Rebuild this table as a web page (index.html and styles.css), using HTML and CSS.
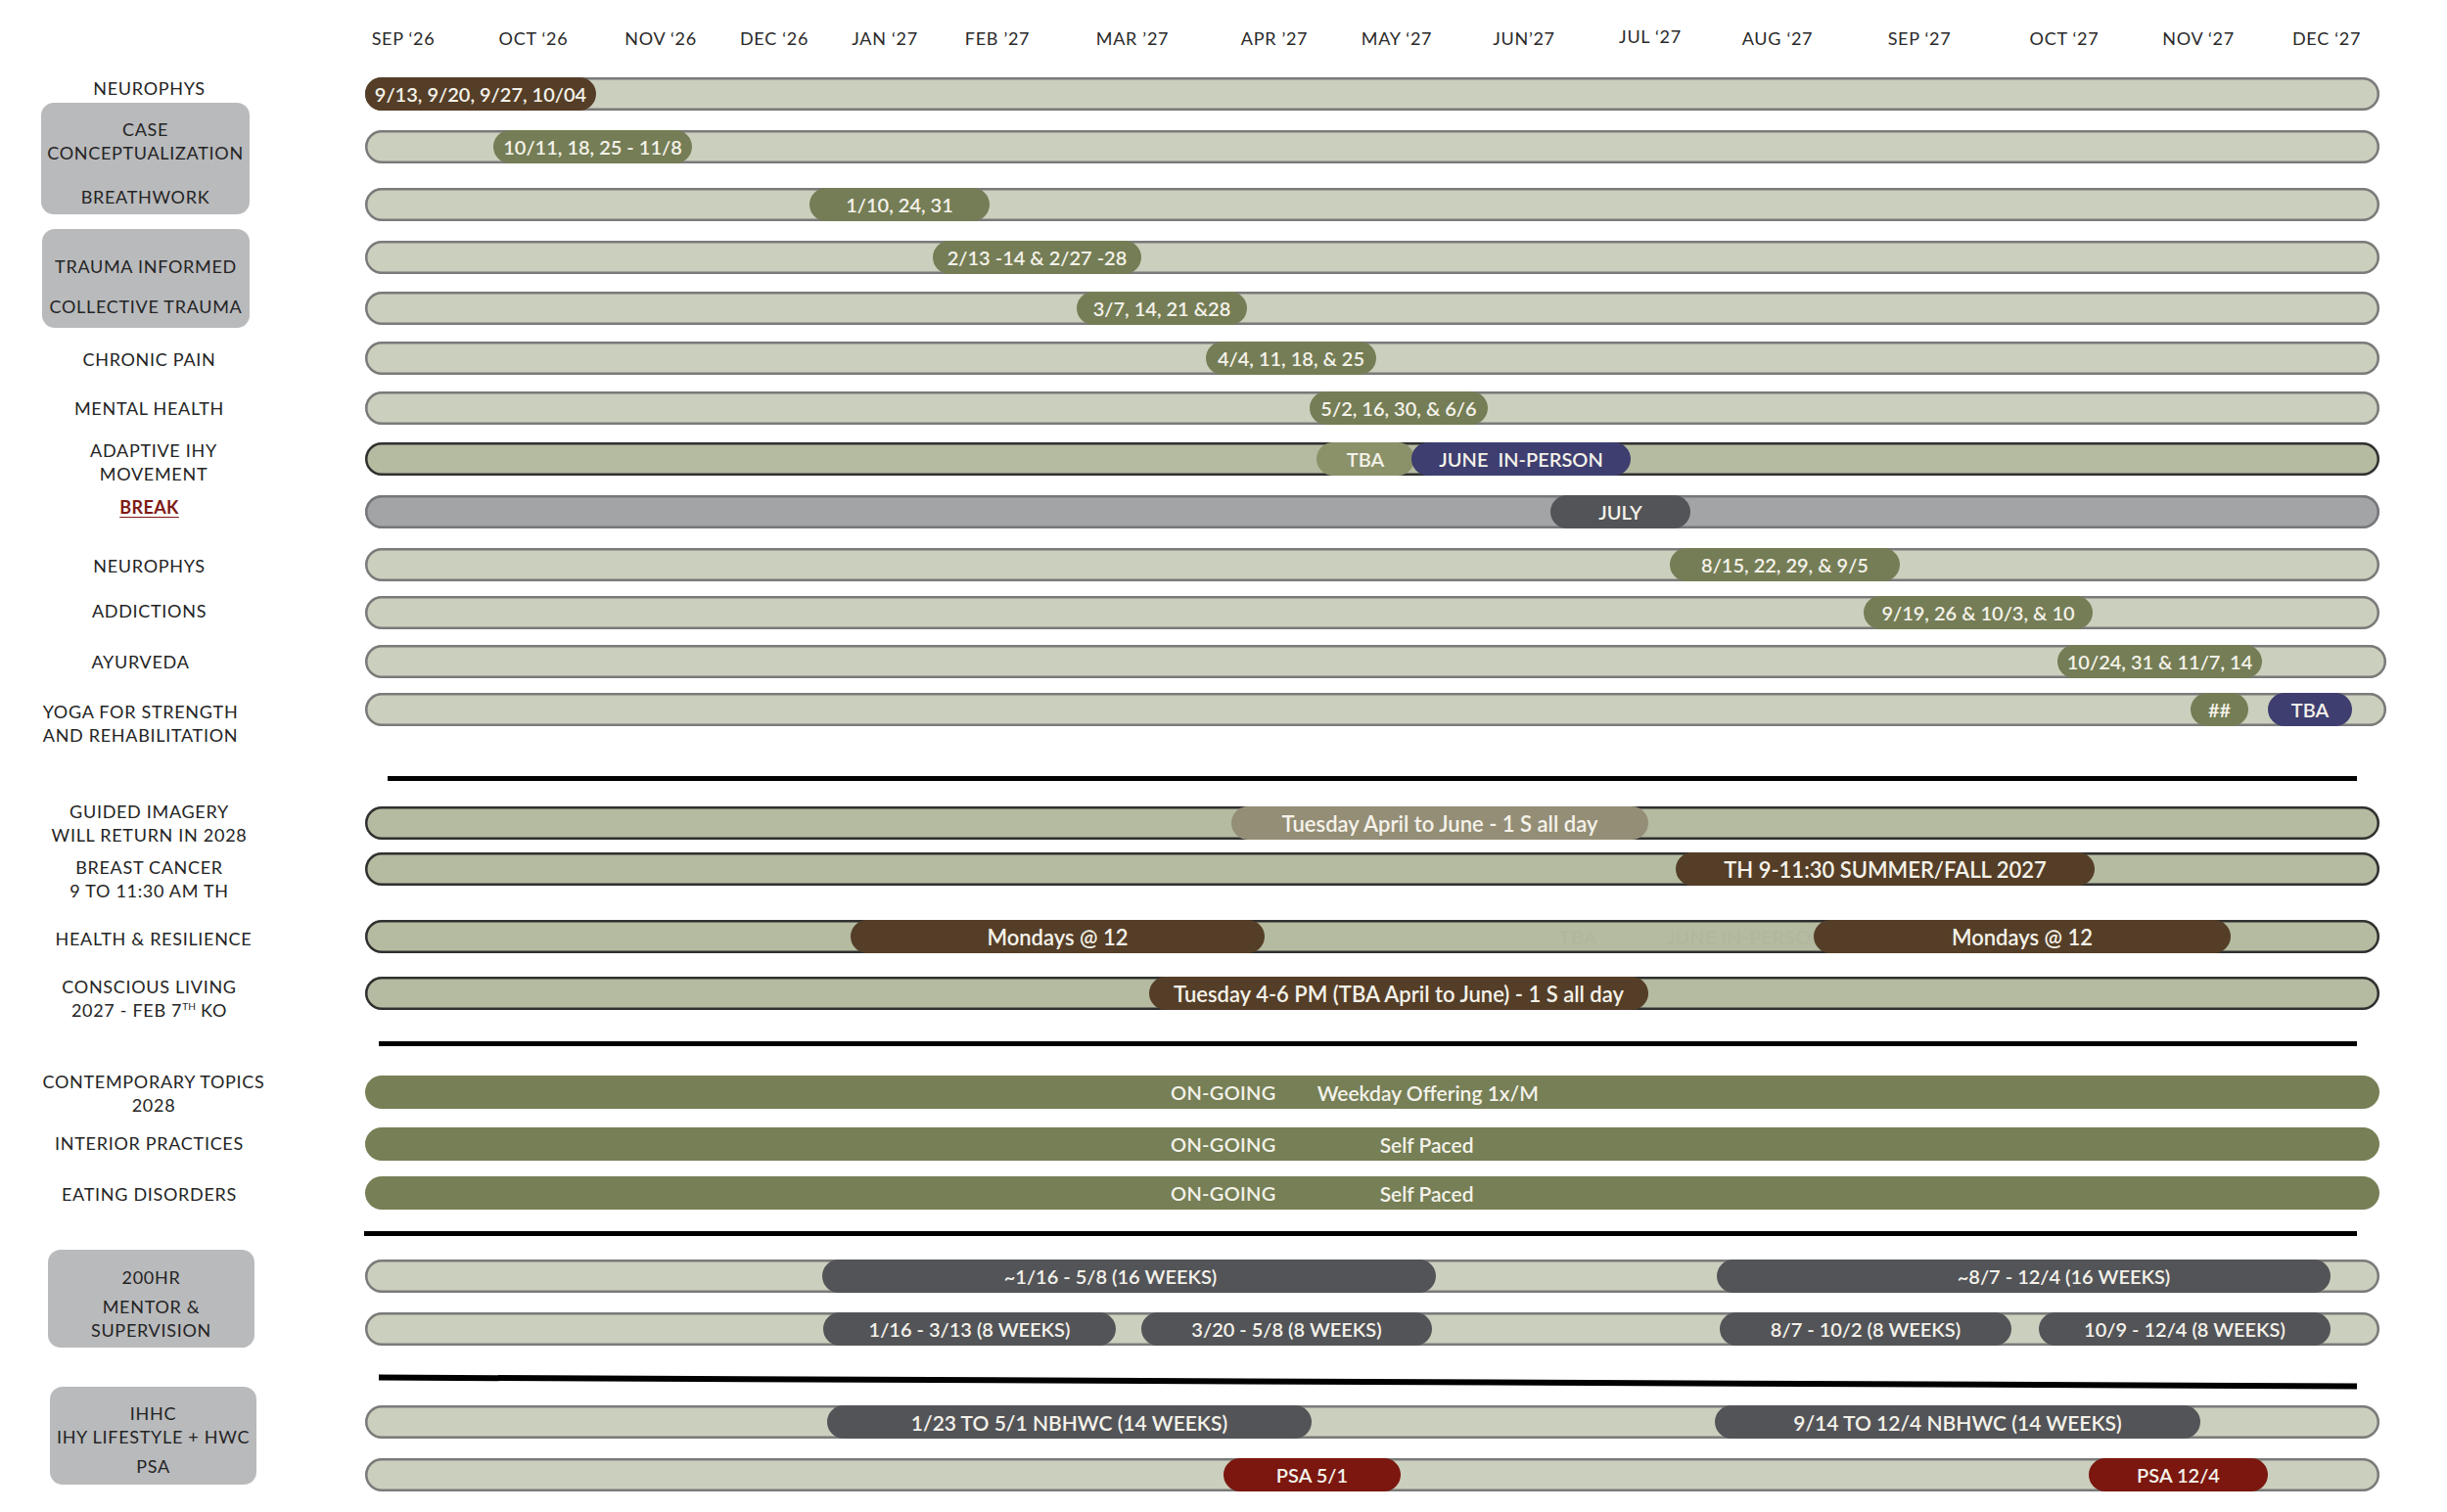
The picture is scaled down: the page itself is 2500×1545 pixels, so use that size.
FILE: index.html
```html
<!DOCTYPE html>
<html lang="en">
<head>
<meta charset="utf-8">
<title>Course Calendar 2026–2027</title>
<link rel="stylesheet" href="styles.css">
</head>
<body>
<div class="page">
  <div class="labels">
    <div class="label mt-78">NEUROPHYS</div>
    <div class="box mt-3 box-a">
      <div class="label">CASE<br>CONCEPTUALIZATION</div>
      <div class="label mt-21">BREATHWORK</div>
    </div>
    <div class="box mt-15 box-b">
      <div class="label">TRAUMA INFORMED</div>
      <div class="label mt-17">COLLECTIVE TRAUMA</div>
    </div>
    <div class="label mt-20">CHRONIC PAIN</div>
    <div class="label mt-26">MENTAL HEALTH</div>
    <div class="label mt-19 right">ADAPTIVE IHY<br>MOVEMENT</div>
    <div class="label mt-10"><span class="break-label">BREAK</span></div>
    <div class="label mt-36">NEUROPHYS</div>
    <div class="label mt-22">ADDICTIONS</div>
    <div class="label mt-28 left">AYURVEDA</div>
    <div class="label mt-27 left">YOGA FOR STRENGTH<br>AND REHABILITATION</div>
    <div class="label mt-54">GUIDED IMAGERY<br>WILL RETURN IN 2028</div>
    <div class="label mt-9">BREAST CANCER<br>9 TO 11:30 AM TH</div>
    <div class="label mt-25 right">HEALTH &amp; RESILIENCE</div>
    <div class="label mt-25">CONSCIOUS LIVING<br>2027 - FEB 7<sup>TH</sup> KO</div>
    <div class="label mt-49 right">CONTEMPORARY TOPICS<br>2028</div>
    <div class="label mt-15">INTERIOR PRACTICES</div>
    <div class="label mt-28">EATING DISORDERS</div>
    <div class="box mt-45 box-c">
      <div class="label">200HR</div>
      <div class="label mt-6">MENTOR &amp;<br>SUPERVISION</div>
    </div>
    <div class="box mt-40 box-d">
      <div class="label">IHHC<br>IHY LIFESTYLE + HWC</div>
      <div class="label mt-6">PSA</div>
    </div>
  </div>

  <div class="chart">
    <div class="axis">
      <span class="month" style="left:39px">SEP ‘26</span>
      <span class="month" style="left:172px">OCT ‘26</span>
      <span class="month" style="left:302px">NOV ‘26</span>
      <span class="month" style="left:418px">DEC ‘26</span>
      <span class="month" style="left:531px">JAN ‘27</span>
      <span class="month" style="left:646px">FEB ’27</span>
      <span class="month" style="left:784px">MAR ’27</span>
      <span class="month" style="left:929px">APR ’27</span>
      <span class="month" style="left:1054px">MAY ‘27</span>
      <span class="month" style="left:1184px">JUN’27</span>
      <span class="month up" style="left:1313px">JUL ‘27</span>
      <span class="month" style="left:1443px">AUG ‘27</span>
      <span class="month" style="left:1588px">SEP ‘27</span>
      <span class="month" style="left:1736px">OCT ‘27</span>
      <span class="month" style="left:1873px">NOV ‘27</span>
      <span class="month" style="left:2004px">DEC ‘27</span>
    </div>

    <div class="bar"><span class="pill brown" style="left:0;width:236px">9/13, 9/20, 9/27, 10/04</span></div>
    <div class="bar mt-20"><span class="pill green" style="left:131px;width:203px">10/11, 18, 25 - 11/8</span></div>
    <div class="bar mt-25"><span class="pill green" style="left:454px;width:184px">1/10, 24, 31</span></div>
    <div class="bar mt-20"><span class="pill green" style="left:580px;width:213px">2/13 -14 &amp; 2/27 -28</span></div>
    <div class="bar mt-18"><span class="pill green" style="left:727px;width:174px">3/7, 14, 21 &amp;28</span></div>
    <div class="bar mt-17"><span class="pill green" style="left:859px;width:174px">4/4, 11, 18, &amp; 25</span></div>
    <div class="bar mt-17"><span class="pill green" style="left:965px;width:182px">5/2, 16, 30, &amp; 6/6</span></div>
    <div class="bar dark mt-18">
      <span class="pill olive" style="left:972px;width:100px">TBA</span>
      <span class="pill navy" style="left:1069px;width:224px">JUNE&nbsp; IN-PERSON</span>
    </div>
    <div class="bar pause mt-20"><span class="pill slate" style="left:1211px;width:143px">JULY</span></div>
    <div class="bar mt-20"><span class="pill green" style="left:1333px;width:235px">8/15, 22, 29, &amp; 9/5</span></div>
    <div class="bar mt-15"><span class="pill green" style="left:1531px;width:234px">9/19, 26 &amp; 10/3, &amp; 10</span></div>
    <div class="bar long mt-16"><span class="pill green" style="left:1729px;width:209px">10/24, 31 &amp; 11/7, 14</span></div>
    <div class="bar long mt-15">
      <span class="pill green" style="left:1865px;width:59px">##</span>
      <span class="pill navy" style="left:1944px;width:86px">TBA</span>
    </div>

    <div class="rule rule-1"></div>

    <div class="bar dark mt-26"><span class="pill taupe large" style="left:885px;width:426px">Tuesday April to June - 1 S all day</span></div>
    <div class="bar dark mt-13"><span class="pill brown large" style="left:1339px;width:428px">TH 9-11:30 SUMMER/FALL 2027</span></div>
    <div class="bar dark mt-35">
      <span class="pill brown large" style="left:496px;width:423px">Mondays @ 12</span>
      <span class="ghost" style="left:1220px">TBA</span>
      <span class="ghost" style="left:1330px">JUNE IN-PERSON</span>
      <span class="pill brown large" style="left:1480px;width:426px">Mondays @ 12</span>
    </div>
    <div class="bar dark mt-24"><span class="pill brown large" style="left:801px;width:510px">Tuesday 4-6 PM (TBA April to June) - 1 S all day</span></div>

    <div class="rule rule-2"></div>

    <div class="bar solid mt-30">
      <span class="ongoing">ON-GOING</span><span class="note note-weekday">Weekday Offering 1x/M</span>
    </div>
    <div class="bar solid mt-19">
      <span class="ongoing">ON-GOING</span><span class="note note-self">Self Paced</span>
    </div>
    <div class="bar solid mt-16">
      <span class="ongoing">ON-GOING</span><span class="note note-self">Self Paced</span>
    </div>

    <div class="rule rule-3"></div>

    <div class="bar mt-24">
      <span class="pill slate lean-l" style="left:467px;width:627px">~1/16 - 5/8 (16 WEEKS)</span>
      <span class="pill slate lean-r" style="left:1381px;width:627px">~8/7 - 12/4 (16 WEEKS)</span>
    </div>
    <div class="bar mt-20">
      <span class="pill slate" style="left:468px;width:299px">1/16 - 3/13 (8 WEEKS)</span>
      <span class="pill slate" style="left:793px;width:297px">3/20 - 5/8 (8 WEEKS)</span>
      <span class="pill slate" style="left:1384px;width:298px">8/7 - 10/2 (8 WEEKS)</span>
      <span class="pill slate" style="left:1710px;width:298px">10/9 - 12/4 (8 WEEKS)</span>
    </div>

    <div class="rule rule-4"></div>

    <div class="bar mt-21">
      <span class="pill slate medium" style="left:472px;width:495px">1/23 TO 5/1 NBHWC (14 WEEKS)</span>
      <span class="pill slate medium" style="left:1379px;width:496px">9/14 TO 12/4 NBHWC (14 WEEKS)</span>
    </div>
    <div class="bar mt-20">
      <span class="pill red" style="left:877px;width:181px">PSA 5/1</span>
      <span class="pill red" style="left:1761px;width:183px">PSA 12/4</span>
    </div>
  </div>
</div>
</body>
</html>
```

FILE: styles.css
```css
* { box-sizing: border-box; }

html, body {
  margin: 0;
  padding: 0;
  background: #ffffff;
}

body {
  width: 2500px;
  height: 1545px;
  overflow: hidden;
  font-family: "Lato", "Open Sans", "Liberation Sans", sans-serif;
  color: #272727;
}

.page {
  display: flex;
  align-items: flex-start;
}

/* ---------- label column ---------- */
.labels {
  width: 305px;
  flex: none;
  display: flex;
  flex-direction: column;
}

.label {
  font-size: 18px;
  line-height: 24px;
  letter-spacing: 0.7px;
  text-align: center;
  color: #242424;
  white-space: nowrap;
}

.label.left { padding-right: 18px; }
.label.right { padding-left: 9px; }

.label sup {
  font-size: 10px;
  line-height: 0;
  vertical-align: 7px;
  letter-spacing: 0;
}

.break-label {
  color: #7d1a14;
  font-weight: 700;
  text-decoration: underline;
  text-underline-offset: 3px;
  letter-spacing: 0.4px;
}

.box {
  background: #b9babc;
  border-radius: 13px;
  display: flex;
  flex-direction: column;
}

.box-a { margin-left: 42px; width: 213px; padding: 15px 0 6px; }
.box-b { margin-left: 43px; width: 212px; padding: 26px 0 10px; }
.box-c { margin-left: 49px; width: 211px; padding: 16px 0 6px; }
.box-d { margin-left: 51px; width: 211px; padding: 15px 0 7px; }

/* ---------- chart column ---------- */
.chart {
  margin-left: 68px;
  width: 2070px;
  flex: none;
  display: flex;
  flex-direction: column;
}

.axis {
  position: relative;
  height: 79px;
}

.month {
  position: absolute;
  top: 27px;
  transform: translateX(-50%);
  font-size: 18px;
  line-height: 24px;
  letter-spacing: 0.7px;
  color: #2a2a2a;
  white-space: nowrap;
}

.month.up { top: 25px; }

.bar {
  position: relative;
  width: 2058px;
  height: 34px;
  border-radius: 17px;
  background: #cbcfbd;
  box-shadow: inset 0 0 0 2.5px #7a7a7a;
  flex: none;
}

.bar.long { width: 2065px; }

.bar.dark {
  background: #b4bba0;
  box-shadow: inset 0 0 0 2.5px #303030;
}

.bar.pause {
  background: #a3a4a6;
  box-shadow: inset 0 0 0 2.5px #76777a;
}

.bar.solid {
  background: #767f55;
  box-shadow: none;
  display: flex;
  align-items: center;
  padding-left: 823px;
  color: #f3f2ea;
  font-size: 20px;
  font-weight: 600;
}

.ongoing { letter-spacing: 0.3px; }
.note { font-size: 21px; }
.note-weekday { margin-left: 42px; }
.note-self { margin-left: 106px; }

.pill {
  position: absolute;
  top: 0;
  height: 34px;
  border-radius: 17px;
  display: flex;
  align-items: center;
  justify-content: center;
  color: #f4f2ea;
  font-size: 20px;
  font-weight: 600;
  white-space: nowrap;
}

.pill.large { font-size: 22px; }
.pill.medium { font-size: 21px; }
.pill.lean-l { padding-right: 38px; }
.pill.lean-r { padding-left: 82px; }

.ghost {
  position: absolute;
  top: 5px;
  font-size: 20px;
  line-height: 24px;
  font-weight: 600;
  color: #b0b79c;
  white-space: nowrap;
}

.brown { background: #553e27; }
.green { background: #747d55; }
.olive { background: #8b9169; }
.navy  { background: #3e3e70; }
.slate { background: #535458; }
.taupe { background: #948e76; }
.red   { background: #7b170f; }

/* ---------- rules ---------- */
.rule {
  height: 5px;
  background: #000;
  flex: none;
}

.rule-1 { margin-top: 51px; margin-left: 23px; width: 2012px; }
.rule-2 { margin-top: 32px; margin-left: 14px; width: 2021px; }
.rule-3 { margin-top: 22px; margin-left: -1px; width: 2036px; }
.rule-4 { margin-top: 34px; margin-left: 14px; width: 2021px; height: 6px; transform: rotate(0.25deg); }

/* ---------- spacing ---------- */
.mt-3 { margin-top: 3px; }
.mt-6 { margin-top: 6px; }
.mt-9 { margin-top: 9px; }
.mt-10 { margin-top: 10px; }
.mt-13 { margin-top: 13px; }
.mt-15 { margin-top: 15px; }
.mt-16 { margin-top: 16px; }
.mt-17 { margin-top: 17px; }
.mt-18 { margin-top: 18px; }
.mt-19 { margin-top: 19px; }
.mt-20 { margin-top: 20px; }
.mt-21 { margin-top: 21px; }
.mt-22 { margin-top: 22px; }
.mt-24 { margin-top: 24px; }
.mt-25 { margin-top: 25px; }
.mt-26 { margin-top: 26px; }
.mt-27 { margin-top: 27px; }
.mt-28 { margin-top: 28px; }
.mt-30 { margin-top: 30px; }
.mt-35 { margin-top: 35px; }
.mt-36 { margin-top: 36px; }
.mt-40 { margin-top: 40px; }
.mt-45 { margin-top: 45px; }
.mt-49 { margin-top: 49px; }
.mt-54 { margin-top: 54px; }
.mt-78 { margin-top: 78px; }
```
